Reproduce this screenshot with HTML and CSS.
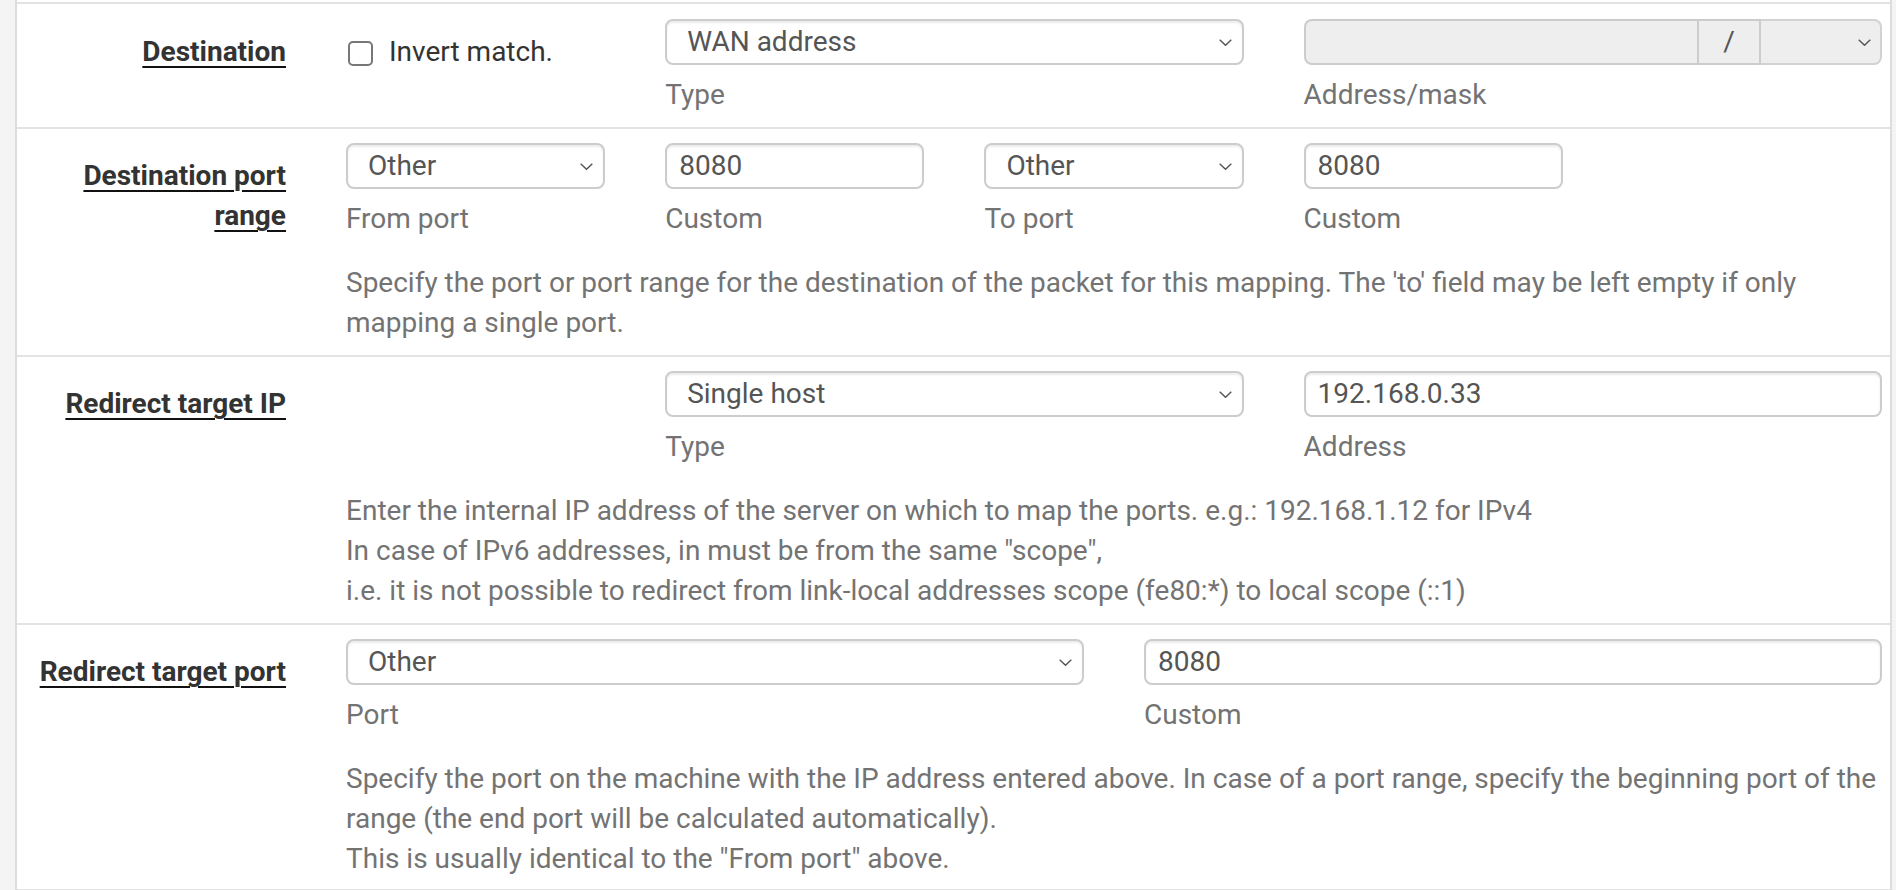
FILE: index.html
```html
<!DOCTYPE html>
<html lang="en">
<head>
<meta charset="utf-8">
<title>Port forward</title>
<link rel="stylesheet" href="styles.css">
</head>
<body>
<div class="page">
  <div class="panel">

    <div class="form-row form-row--first">
      <div class="row-label"><span class="req">Destination</span></div>
      <div class="field span-2">
        <label class="check"><span class="checkbox"></span>Invert match.</label>
      </div>
      <div class="field span-4">
        <div class="select"><span>WAN address</span><svg class="chev" viewBox="0 0 13 7"><path d="M0.7 0.7 L6.5 6.3 L12.3 0.7" fill="none" stroke="#555" stroke-width="1.4"/></svg></div>
        <div class="sub">Type</div>
      </div>
      <div class="field span-4">
        <div class="input-group">
          <div class="ig-input"></div>
          <div class="ig-addon">/</div>
          <div class="ig-select"><svg class="chev" viewBox="0 0 13 7"><path d="M0.7 0.7 L6.5 6.3 L12.3 0.7" fill="none" stroke="#555" stroke-width="1.4"/></svg></div>
        </div>
        <div class="sub">Address/mask</div>
      </div>
    </div>

    <div class="form-row">
      <div class="row-label"><span class="req">Destination port range</span></div>
      <div class="field span-2">
        <div class="select"><span>Other</span><svg class="chev" viewBox="0 0 13 7"><path d="M0.7 0.7 L6.5 6.3 L12.3 0.7" fill="none" stroke="#555" stroke-width="1.4"/></svg></div>
        <div class="sub">From port</div>
      </div>
      <div class="field span-2">
        <div class="input">8080</div>
        <div class="sub">Custom</div>
      </div>
      <div class="field span-2">
        <div class="select"><span>Other</span><svg class="chev" viewBox="0 0 13 7"><path d="M0.7 0.7 L6.5 6.3 L12.3 0.7" fill="none" stroke="#555" stroke-width="1.4"/></svg></div>
        <div class="sub">To port</div>
      </div>
      <div class="field span-2">
        <div class="input">8080</div>
        <div class="sub">Custom</div>
      </div>
      <div class="help">Specify the port or port range for the destination of the packet for this mapping. The 'to' field may be left empty if only mapping a single port.</div>
    </div>

    <div class="form-row">
      <div class="row-label"><span class="req">Redirect target IP</span></div>
      <div class="field col-3 span-4">
        <div class="select"><span>Single host</span><svg class="chev" viewBox="0 0 13 7"><path d="M0.7 0.7 L6.5 6.3 L12.3 0.7" fill="none" stroke="#555" stroke-width="1.4"/></svg></div>
        <div class="sub">Type</div>
      </div>
      <div class="field span-4">
        <div class="input">192.168.0.33</div>
        <div class="sub">Address</div>
      </div>
      <div class="help">Enter the internal IP address of the server on which to map the ports. e.g.: 192.168.1.12 for IPv4<br>In case of IPv6 addresses, in must be from the same "scope",<br>i.e. it is not possible to redirect from link-local addresses scope (fe80:*) to local scope (::1)</div>
    </div>

    <div class="form-row">
      <div class="row-label"><span class="req">Redirect target port</span></div>
      <div class="field span-5">
        <div class="select"><span>Other</span><svg class="chev" viewBox="0 0 13 7"><path d="M0.7 0.7 L6.5 6.3 L12.3 0.7" fill="none" stroke="#555" stroke-width="1.4"/></svg></div>
        <div class="sub">Port</div>
      </div>
      <div class="field span-5">
        <div class="input">8080</div>
        <div class="sub">Custom</div>
      </div>
      <div class="help">Specify the port on the machine with the IP address entered above. In case of a port range, specify the beginning port of the range (the end port will be calculated automatically).<br>This is usually identical to the "From port" above.</div>
    </div>

  </div>
</div>
</body>
</html>
```

FILE: styles.css
```css
* {
  box-sizing: border-box;
}

html,
body {
  margin: 0;
}

body {
  font-family: Roboto, "Liberation Sans", sans-serif;
  font-size: 28px;
  line-height: 40px;
  color: #333;
  background: #f4f4f4;
}

.page {
  display: flex;
  height: 890px;
  overflow: hidden;
  padding-left: 15px;
  padding-right: 4px;
}

.panel {
  flex: 1;
  background: #fff;
  border-left: 2px solid #dddddd;
  border-right: 2px solid #dddddd;
  padding-top: 2px;
}

.form-row {
  display: grid;
  grid-template-columns: 269px repeat(10, 1fr);
  column-gap: 60px;
  border-top: 2px solid #e3e3e3;
  padding: 14px 8px 12px 0;
}

.form-row--first {
  padding-top: 15px;
}

.form-row:last-child {
  border-bottom: 2px solid #e3e3e3;
  padding-bottom: 10px;
}

.row-label {
  grid-column: 1;
  grid-row: 1;
  text-align: right;
  font-weight: 700;
  color: #333;
  padding-top: 13px;
}

.req {
  text-decoration: underline;
  text-decoration-thickness: 2px;
  text-underline-offset: 5px;
  text-decoration-color: #111;
}

.field {
  grid-row: 1;
  display: flex;
  flex-direction: column;
  min-width: 0;
}

.span-2 { grid-column: span 2; }
.span-4 { grid-column: span 4; }
.span-5 { grid-column: span 5; }
.col-3 { grid-column: 4 / span 4; }

.check {
  display: flex;
  align-items: center;
  gap: 16px;
  margin-top: 13px;
  height: 40px;
  color: #333;
}

.checkbox {
  width: 25px;
  height: 25px;
  border: 2px solid #777;
  border-radius: 5px;
  margin-top: 3px;
  margin-left: 2px;
  background: #fff;
  flex: none;
}

.select,
.input {
  height: 46px;
  border: 2px solid #cccccc;
  border-radius: 8px;
  box-shadow: inset 0 2px 2px rgba(0, 0, 0, 0.075);
  background: #fff;
  color: #555;
  display: flex;
  align-items: center;
  white-space: nowrap;
}

.select {
  justify-content: space-between;
  padding: 0 10px 0 20px;
}

.input {
  padding: 0 12px;
}

.chev {
  width: 13px;
  height: 7px;
  flex: none;
}

.sub {
  margin-top: 10px;
  color: #737373;
}

.help {
  grid-column: 2 / -1;
  grid-row: 2;
  margin-top: 24px;
  color: #737373;
}

.input-group {
  display: flex;
  height: 46px;
  color: #555;
}

.ig-input {
  flex: 1;
  background: #eeeeee;
  border: 2px solid #cccccc;
  border-right: 0;
  border-radius: 8px 0 0 8px;
}

.ig-addon {
  width: 64px;
  background: #eeeeee;
  border: 2px solid #cccccc;
  display: flex;
  align-items: center;
  justify-content: center;
}

.ig-select {
  width: 121px;
  background: #eeeeee;
  border: 2px solid #d2d2d2;
  border-left: 0;
  border-radius: 0 8px 8px 0;
  display: flex;
  align-items: center;
  justify-content: flex-end;
  padding-right: 9px;
}
```
